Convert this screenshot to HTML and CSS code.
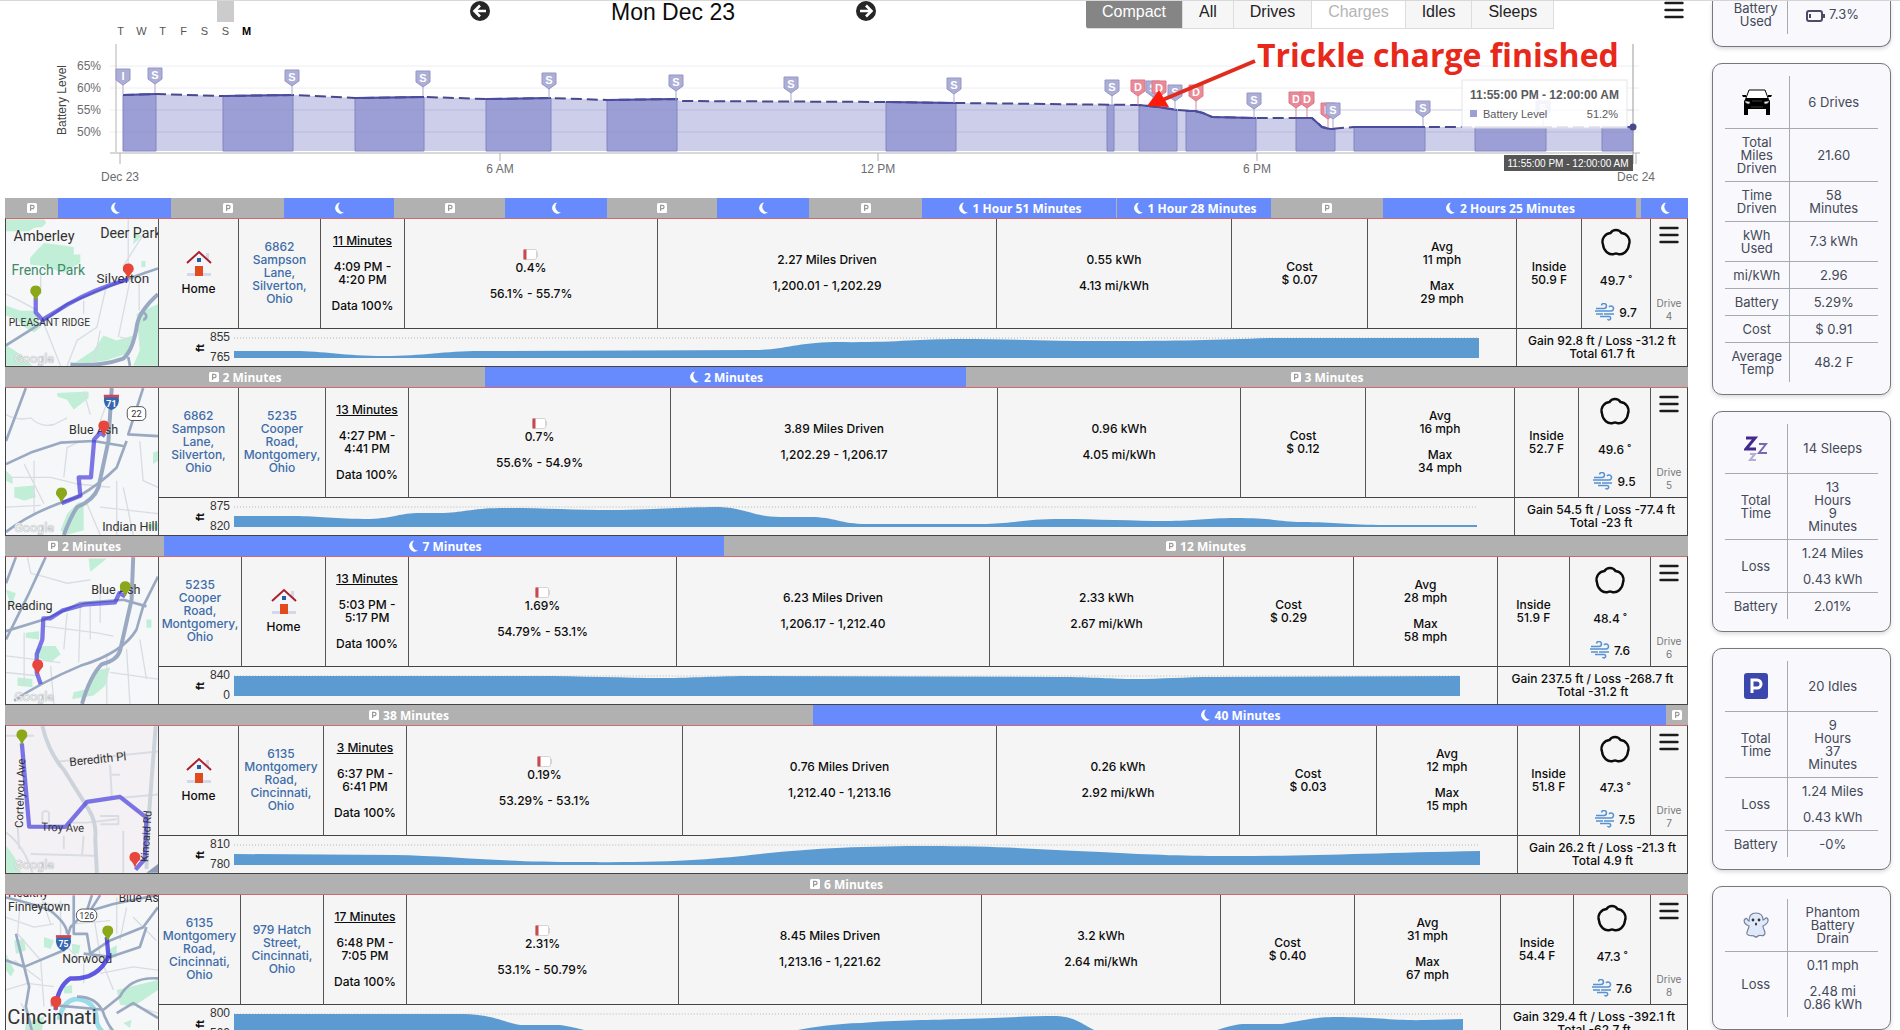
FILE: index.html
```html
<!DOCTYPE html>
<html lang="en">
<head>
    <meta charset="UTF-8">
    <meta name="viewport" content="width=device-width, initial-scale=1.0">
    <title>Mon Dec 23</title>
    <link rel="stylesheet" href="styles.css">
</head>
<body>
    <!-- shared icons -->
    <svg class="sprite" width="0" height="0" aria-hidden="true">
        <symbol id="moon" viewBox="0 0 12 12"><path d="M7 0.5A5.6 5.6 0 1 0 11 10.6A6 6 0 0 1 7 0.5Z" fill="#fff"/></symbol>
        <symbol id="park" viewBox="0 0 10 10"><rect width="10" height="10" rx="1.5" fill="#fff"/><path d="M3.6 8V2.4H5.4A1.6 1.6 0 0 1 5.4 5.7H3.6" fill="none" stroke="#9a9a9a" stroke-width="1.2"/></symbol>
        <symbol id="menu" viewBox="0 0 20 18"><path d="M1.5 2H18.5M1.5 9H18.5M1.5 16H18.5" stroke="#1c1c1c" stroke-width="2.4" stroke-linecap="round"/></symbol>
        <symbol id="house" viewBox="0 0 26 28"><rect x="20" y="3" width="3" height="7" fill="#d5d8e4"/><path d="M4 12L13 4L22 12V24H4Z" fill="#f3f4fa"/><rect x="1" y="23" width="24" height="3" fill="#d5d8ea"/><path d="M1 13L13 2L25 13" fill="none" stroke="#ab1f2d" stroke-width="2"/><rect x="11" y="8" width="4" height="4" fill="#20609f"/><rect x="9" y="16" width="8" height="10" fill="#e04a1c"/></symbol>
        <symbol id="low" viewBox="0 0 16 11"><rect x="0.5" y="0.5" width="13" height="10" rx="1.5" fill="#fff" stroke="#d9d4d4"/><path d="M14.500 3V8" stroke="#d9d4d4"/><rect x="0.5" y="0.5" width="3" height="10" fill="#c8494e"/></symbol>
        <symbol id="cloud" viewBox="0 0 32 30"><path d="M10.500 5C13 1 19 1 21.500 5C27 5.500 31 11 29 16.500C28.500 23 23 27.500 18 26Q16 25 14 26C9 27.500 3.500 23 3 16.500C1 11 5 5.500 10.500 5Z" fill="none" stroke="#0c0c0c" stroke-width="2.4"/></symbol>
        <symbol id="wind" viewBox="0 0 20 18"><path d="M0 8H12M1 5.500H9A2.500 2.500 0 1 0 6.500 2.500M12 8H16A2.500 2.500 0 1 0 14 4M1 11H8M5 13.500H14A1.700 1.700 0 1 1 12.500 16M9 11H19" fill="none" stroke="#5691d2" stroke-width="1.5"/></symbol>
        <symbol id="pin-red" viewBox="0 0 34 46"><path d="M17 1A16 16 0 0 1 27 30Q21 36 19 45H15Q13 36 7 30A16 16 0 0 1 17 1Z" fill="#e8453c"/></symbol>
        <symbol id="pin-green" viewBox="0 0 34 46"><path d="M17 1A16 16 0 0 1 27 30Q21 36 19 45H15Q13 36 7 30A16 16 0 0 1 17 1Z" fill="#8aa81a"/></symbol>
        <symbol id="flag-purple" viewBox="0 0 16 26"><path d="M8 16V26" stroke="#a9a8cf"/><path d="M1 1H15V12L8 17L1 12Z" fill="#acaed6" stroke="#9596c6"/></symbol>
        <symbol id="flag-red" viewBox="0 0 16 26"><path d="M8 16V26" stroke="#d58b9c"/><path d="M1 1H15V12L8 17L1 12Z" fill="#e88a98" stroke="#df7687"/></symbol>
    </svg>

    <div class="page">
        <main class="main">
            <header class="header">
                <div class="week">
                    <span>T</span><span>W</span><span>T</span><span>F</span><span>S</span><span class="marked">S</span><span class="today">M</span>
                </div>
                <div class="day-nav">
                    <button class="icon-button" aria-label="Previous day"><svg width="20" height="20" viewBox="0 0 20 20"><circle cx="10" cy="10" r="10" fill="#262626"/><path d="M10 4.500L4.500 10L10 15.500M5 10H16" fill="none" stroke="#fff" stroke-width="2.600"/></svg></button>
                    <h1>Mon Dec 23</h1>
                    <button class="icon-button" aria-label="Next day"><svg width="20" height="20" viewBox="0 0 20 20"><circle cx="10" cy="10" r="10" fill="#262626"/><path d="M10 4.500L15.500 10L10 15.500M15 10H4" fill="none" stroke="#fff" stroke-width="2.600"/></svg></button>
                </div>
                <div class="filters">
                    <button class="active">Compact</button><button>All</button><button>Drives</button><button disabled>Charges</button><button>Idles</button><button>Sleeps</button>
                </div>
                <button class="icon-button header-menu" aria-label="Menu"><svg width="20" height="18"><use href="#menu"/></svg></button>
            </header>

            <svg class="battery-chart" viewBox="5 40 1683 158">
                <path d="M110 66H1639M110 88H1639M110 110H1639M110 132H1639" stroke="#eeeef2"/>
                <path d="M123 95L156 94L223 96L293 95L355 98L424 97L486 99L551 98L607 100L677 99L680 101L886 102L956 103L1139 105L1158 107L1177 110L1195 111L1203 113L1212 117L1256 118L1312 118L1322 127L1330 129L1354 127H1633V151H123Z" fill="#cdceea"/>
                <g fill="#9c9fd5" stroke="#8284c0">
                    <path d="M123 95L156 94V151H123Z"/>
                    <path d="M223 96L293 95V151H223Z"/>
                    <path d="M355 98L424 97V151H355Z"/>
                    <path d="M486 99L551 98V151H486Z"/>
                    <path d="M607 100L677 99V151H607Z"/>
                    <path d="M886 102L956 103V151H886Z"/>
                    <path d="M1107 105H1114V151H1107Z"/>
                    <path d="M1139 105L1158 107L1177 110V151H1139Z"/>
                    <path d="M1186 111H1195L1203 113L1212 117L1256 118V151H1186Z"/>
                    <path d="M1296 118H1312L1322 127L1330 129H1335V151H1296Z"/>
                    <path d="M1354 127H1425V151H1354Z"/>
                    <path d="M1475 127H1546V151H1475Z"/>
                    <path d="M1602 127H1633V151H1602Z"/>
                </g>
                <path d="M123 110H1633M123 132H1633" stroke="#8d8fc0" opacity="0.3"/>
                <path d="M123 95L156 94L223 96L293 95L355 98L424 97L486 99L551 98L607 100L677 99L680 101L886 102L956 103L1139 105L1158 107L1177 110L1195 111L1203 113L1212 117L1256 118L1296 118L1312 118L1322 127L1330 129L1354 127H1633" fill="none" stroke="#48488c" stroke-width="2" stroke-dasharray="11 5"/>
                <path d="M123 95L156 94M223 96L293 95M355 98L424 97M486 99L551 98M607 100L677 99M886 102L956 103M1139 105L1158 107L1177 110M1186 111H1195L1203 113L1212 117L1256 118M1296 118H1312L1322 127L1330 129H1335M1354 127H1425M1475 127H1546M1602 127H1633" fill="none" stroke="#4a4c9e" stroke-width="2"/>
                <path d="M116 44V152M110 153H1640" fill="none" stroke="#cbcbd0" stroke-width="1.500"/>
                <path d="M120 153V164M500 153V161M878 153V161M1257 153V161M1636 153V164" stroke="#b0b0b5"/>
                <g class="axis">
                    <text x="101" y="70" text-anchor="end">65%</text>
                    <text x="101" y="92" text-anchor="end">60%</text>
                    <text x="101" y="114" text-anchor="end">55%</text>
                    <text x="101" y="136" text-anchor="end">50%</text>
                    <text x="120" y="181" text-anchor="middle">Dec 23</text>
                    <text x="500" y="173" text-anchor="middle">6 AM</text>
                    <text x="878" y="173" text-anchor="middle">12 PM</text>
                    <text x="1257" y="173" text-anchor="middle">6 PM</text>
                    <text x="1636" y="181" text-anchor="middle">Dec 24</text>
                    <text class="axis-title" transform="translate(66 100) rotate(-90)" text-anchor="middle">Battery Level</text>
                </g>
                <g class="flags">
                    <use href="#flag-purple" x="115" y="68" width="16" height="26"/><text x="123" y="80">I</text>
                    <use href="#flag-purple" x="147" y="67" width="16" height="26"/><text x="155" y="79">S</text>
                    <use href="#flag-purple" x="284" y="69" width="16" height="26"/><text x="292" y="81">S</text>
                    <use href="#flag-purple" x="415" y="70" width="16" height="26"/><text x="423" y="82">S</text>
                    <use href="#flag-purple" x="541" y="72" width="16" height="26"/><text x="549" y="84">S</text>
                    <use href="#flag-purple" x="668" y="74" width="16" height="26"/><text x="676" y="86">S</text>
                    <use href="#flag-purple" x="783" y="76" width="16" height="26"/><text x="791" y="88">S</text>
                    <use href="#flag-purple" x="946" y="77" width="16" height="26"/><text x="954" y="89">S</text>
                    <use href="#flag-purple" x="1104" y="79" width="16" height="26"/><text x="1112" y="91">S</text>
                    <use href="#flag-red" x="1130" y="79" width="16" height="26"/><text x="1138" y="91">D</text>
                    <use href="#flag-purple" x="1145" y="80" width="16" height="26"/><text x="1153" y="92">S</text>
                    <use href="#flag-red" x="1151" y="80" width="16" height="26"/><text x="1159" y="92">D</text>
                    <use href="#flag-purple" x="1167" y="84" width="16" height="26"/><text x="1175" y="96">S</text>
                    <use href="#flag-red" x="1188" y="84" width="16" height="26"/><text x="1196" y="96">D</text>
                    <use href="#flag-purple" x="1246" y="92" width="16" height="26"/><text x="1254" y="104">S</text>
                    <use href="#flag-red" x="1288" y="91" width="16" height="26"/><text x="1296" y="103">D</text>
                    <use href="#flag-red" x="1299" y="91" width="16" height="26"/><text x="1307" y="103">D</text>
                    <use href="#flag-red" x="1320" y="102" width="16" height="26"/><text x="1328" y="114">D</text>
                    <use href="#flag-purple" x="1325" y="102" width="16" height="26"/><text x="1333" y="114">S</text>
                    <use href="#flag-purple" x="1415" y="100" width="16" height="26"/><text x="1423" y="112">S</text>
                    <use href="#flag-purple" x="1535" y="100" width="16" height="26"/><text x="1543" y="112">S</text>
                </g>

                <path d="M1633 44V164" stroke="#9a9aa0"/>
                <circle cx="1633" cy="127" r="3.500" fill="#48488c"/>
                <g class="tip">
                    <rect x="1462" y="80" width="165" height="48" fill="#fff" opacity="0.880" stroke="#e4e4e8"/>
                    <text x="1470" y="99" class="tip-title">11:55:00 PM - 12:00:00 AM</text>
                    <rect x="1470" y="110" width="7" height="7" fill="#9c9fd5"/>
                    <text x="1483" y="118">Battery Level</text>
                    <text x="1618" y="118" text-anchor="end">51.2%</text>
                </g>
                <rect x="1504" y="155" width="129" height="16" fill="#555"/>
                <text x="1568" y="167" class="cursor-label">11:55:00 PM - 12:00:00 AM</text>

                <path d="M1255 61L1160 101" stroke="#e02b1d" stroke-width="4"/>
                <path d="M1147 106L1159 90L1169 107Z" fill="#fb1b0b"/>
                <text x="1257" y="67" class="note">Trickle charge finished</text>
            </svg>

            <div class="strip">
                <div class="idle" style="flex-grow:53"><svg class="p"><use href="#park"/></svg></div>
                <div class="sleep" style="flex-grow:113"><svg class="m"><use href="#moon"/></svg></div>
                <div class="idle" style="flex-grow:113"><svg class="p"><use href="#park"/></svg></div>
                <div class="sleep" style="flex-grow:110"><svg class="m"><use href="#moon"/></svg></div>
                <div class="idle" style="flex-grow:111"><svg class="p"><use href="#park"/></svg></div>
                <div class="sleep" style="flex-grow:102"><svg class="m"><use href="#moon"/></svg></div>
                <div class="idle" style="flex-grow:110"><svg class="p"><use href="#park"/></svg></div>
                <div class="sleep" style="flex-grow:92"><svg class="m"><use href="#moon"/></svg></div>
                <div class="idle" style="flex-grow:113"><svg class="p"><use href="#park"/></svg></div>
                <div class="sleep" style="flex-grow:194"><svg class="m"><use href="#moon"/></svg>1 Hour 51 Minutes</div>
                <div class="idle" style="flex-grow:1"></div>
                <div class="sleep" style="flex-grow:154"><svg class="m"><use href="#moon"/></svg>1 Hour 28 Minutes</div>
                <div class="idle" style="flex-grow:112"><svg class="p"><use href="#park"/></svg></div>
                <div class="sleep" style="flex-grow:253"><svg class="m"><use href="#moon"/></svg>2 Hours 25 Minutes</div>
                <div class="idle" style="flex-grow:5"></div>
                <div class="sleep" style="flex-grow:47"><svg class="m"><use href="#moon"/></svg></div>
            </div>
            <section class="drive">
                <svg class="map" viewBox="15 73 460 444">
                    <path class="park" d="M15 73H130Q145 85 120 98Q100 95 85 110H15ZM88 190Q110 165 130 145Q180 150 220 158V180H240V205L190 235L130 215L88 210ZM15 335L60 350H100L120 400L100 415Q60 400 50 375L15 365ZM15 455Q60 480 95 517H15ZM310 425L350 440L400 425L380 480L320 500L210 517L280 470ZM410 360L475 330V517H400L420 470ZM405 110L425 125L400 150ZM425 200H437V218H425Z"/>
                    <path class="lane" d="M385 73V260L440 230M430 120L370 215M15 300Q60 320 110 350M320 270L290 400L230 440L200 517M390 260L355 430M120 240V300M250 320V360M300 410L280 517M130 390L180 517M418 260V350M360 430L400 440"/>
                    <path class="road" d="M15 455L110 395L200 330L380 255L475 222"/>
                    <path class="road thick" d="M475 300Q420 350 412 390Q400 470 370 495Q300 520 210 513"/>
                    <path class="road" d="M420 360A11 11 0 1 1 430 378M385 490L390 517"/>
                    <text x="38" y="138" font-size="44">Amberley</text>
                    <text x="300" y="130" font-size="43">Deer Park</text>
                    <text x="32" y="242" font-size="42" class="green">French Park</text>
                    <text x="289" y="267" font-size="41">Silverton</text>
                    <text x="23" y="396" font-size="31">PLEASANT RIDGE</text>
                    <path class="route" d="M105 310V355L125 378L200 332Q280 285 385 255"/>
                    <use href="#pin-green" x="88" y="273" width="34" height="46"/>
                    <use href="#pin-red" x="368" y="206" width="34" height="46"/>
                    <text class="google" x="40" y="507">Google</text>
                </svg>
                <div class="stats stats-4">
                    <div class="place"><svg width="26" height="28"><use href="#house"/></svg>Home</div>
                    <div><a href="#">6862<br>Sampson<br>Lane,<br>Silverton,<br>Ohio</a></div>
                    <div><p><u>11 Minutes</u></p><p>4:09 PM -<br>4:20 PM</p><p>Data 100%</p></div>
                    <div><p class="charge"><svg width="16" height="11"><use href="#low"/></svg>0.4%</p><p>56.1% - 55.7%</p></div>
                    <div><p>2.27 Miles Driven</p><p>1,200.01 - 1,202.29</p></div>
                    <div><p>0.55 kWh</p><p>4.13 mi/kWh</p></div>
                    <div><p>Cost<br>$ 0.07</p></div>
                    <div><p>Avg<br>11 mph</p><p>Max<br>29 mph</p></div>
                    <div><p>Inside<br>50.9 F</p></div>
                    <div class="weather"><svg width="32" height="30"><use href="#cloud"/></svg><span>49.7 ˚</span><span><svg width="20" height="18"><use href="#wind"/></svg> 9.7</span></div>
                    <div class="more"><button class="icon-button" aria-label="Drive 4 menu"><svg width="20" height="18"><use href="#menu"/></svg></button><span>Drive<br>4</span></div>
                    <div class="profile">
                        <span class="unit">ft</span><span class="range"><span>855</span><span>765</span></span>
                        <svg class="elevation" viewBox="0 0 1245 21" preserveAspectRatio="none"><path d="M0 1H1245" class="dots"/><path class="hill" d="M0 14H60C90 14 110 19 150 19C190 19 210 14 246 14L520 13C550 13 560 6 600 5C660 6 680 2 726 2C780 2 820 4 866 4C950 4 980 3 1036 1H1245V21H0Z"/></svg>
                    </div>
                    <div class="gain"><p>Gain 92.8 ft / Loss -31.2 ft<br>Total 61.7 ft</p></div>
                </div>
            </section>

            <div class="strip">
                <div class="idle" style="flex-grow:480"><svg class="p"><use href="#park"/></svg>2 Minutes</div>
                <div class="sleep" style="flex-grow:481"><svg class="m"><use href="#moon"/></svg>2 Minutes</div>
                <div class="idle" style="flex-grow:722"><svg class="p"><use href="#park"/></svg>3 Minutes</div>
            </div>
            <section class="drive">
                <svg class="map" viewBox="15 580 460 444">
                    <path class="park" d="M170 595L265 590V610L220 645L200 615L170 605ZM40 880L100 875L105 910L70 920L40 910ZM235 925H250V1010L200 1024L180 1010L200 960ZM460 775L475 770V800L460 810ZM15 830L35 850V870L15 860ZM440 990H475V1010L440 1005Z"/>
                    <path class="lane" d="M15 660Q50 680 90 670Q120 700 160 690L200 670M100 800V960M15 850H150L230 870L330 880M190 850L200 760L240 740M70 810L130 930M350 860V1024M300 940L475 960M420 740L430 860L475 880M250 590L270 660M260 930L300 1024M15 940L120 935M370 880L400 1024M330 600L300 680"/>
                    <path class="road" d="M15 810L90 775L180 745L280 740L370 755M75 580L15 740M430 580L385 720L475 725M380 740L350 820Q300 870 230 910Q100 950 15 1015"/>
                    <path class="road thick" d="M335 580L325 740L295 880Q280 920 230 940Q210 970 190 1024"/>
                    <text x="206" y="718" font-size="38">Blue Ash</text>
                    <text x="306" y="1013" font-size="38">Indian Hill</text>
                    <path class="route" d="M183 928L240 906L235 850H272L282 735L300 715L315 725"/>
                    <path d="M312 605Q334 595 356 605Q362 635 334 647Q306 635 312 605Z" fill="#3467b0"/><path d="M311 600H357V608H311Z" fill="#d0455a"/>
                    <text x="334" y="637" font-size="27" class="shield">71</text>
                    <rect x="382" y="636" width="56" height="42" rx="14" fill="#fff" stroke="#555" stroke-width="3"/>
                    <text x="394" y="668" font-size="28">22</text>
                    <use href="#pin-green" x="166" y="880" width="34" height="46"/>
                    <use href="#pin-red" x="294" y="677" width="34" height="46"/>
                    <text class="google" x="40" y="1014">Google</text>
                </svg>
                <div class="stats stats-5">
                    <div><a href="#">6862<br>Sampson<br>Lane,<br>Silverton,<br>Ohio</a></div>
                    <div><a href="#">5235<br>Cooper<br>Road,<br>Montgomery,<br>Ohio</a></div>
                    <div><p><u>13 Minutes</u></p><p>4:27 PM -<br>4:41 PM</p><p>Data 100%</p></div>
                    <div><p class="charge"><svg width="16" height="11"><use href="#low"/></svg>0.7%</p><p>55.6% - 54.9%</p></div>
                    <div><p>3.89 Miles Driven</p><p>1,202.29 - 1,206.17</p></div>
                    <div><p>0.96 kWh</p><p>4.05 mi/kWh</p></div>
                    <div><p>Cost<br>$ 0.12</p></div>
                    <div><p>Avg<br>16 mph</p><p>Max<br>34 mph</p></div>
                    <div><p>Inside<br>52.7 F</p></div>
                    <div class="weather"><svg width="32" height="30"><use href="#cloud"/></svg><span>49.6 ˚</span><span><svg width="20" height="18"><use href="#wind"/></svg> 9.5</span></div>
                    <div class="more"><button class="icon-button" aria-label="Drive 5 menu"><svg width="20" height="18"><use href="#menu"/></svg></button><span>Drive<br>5</span></div>
                    <div class="profile">
                        <span class="unit">ft</span><span class="range"><span>875</span><span>820</span></span>
                        <svg class="elevation" viewBox="0 0 1241 21" preserveAspectRatio="none"><path d="M0 1H1241" class="dots"/><path class="hill" d="M0 10H60C85 10 100 13 136 13C160 12 165 7 186 7H210C230 6 240 2 270 2C310 2 340 4 376 4C420 4 440 1 485 1C510 2 520 11 545 11H575C600 11 605 18 632 18H751C780 17 790 13 826 13C860 13 900 15 930 15C960 15 970 12 1000 12C1040 12 1045 16 1066 16C1100 16 1110 19 1150 19H1241V21H0Z"/></svg>
                    </div>
                    <div class="gain"><p>Gain 54.5 ft / Loss -77.4 ft<br>Total -23 ft</p></div>
                </div>
            </section>

            <div class="strip">
                <div class="idle" style="flex-grow:159"><svg class="p"><use href="#park"/></svg>2 Minutes</div>
                <div class="sleep" style="flex-grow:560"><svg class="m"><use href="#moon"/></svg>7 Minutes</div>
                <div class="idle" style="flex-grow:964"><svg class="p"><use href="#park"/></svg>12 Minutes</div>
            </div>
            <section class="drive">
                <svg class="map" viewBox="15 51 460 444">
                    <path class="park" d="M265 55H320L270 95ZM130 320H165L180 345L150 370L110 355L105 330ZM285 395L330 385L315 440L280 470L215 480L220 460L260 450ZM15 150L45 160L30 200ZM75 280L115 275V300L75 295ZM50 415L95 420V445L50 440ZM440 240H455V265H440Z"/>
                    <path class="lane" d="M80 51L90 100L130 110L200 130L270 120M240 200L235 370M130 260L290 280L340 290M15 350L180 370M70 280V440M200 220L190 330M150 380L160 495M330 400L475 420M320 340V495M420 300L440 420M270 200V300M300 130V250M380 330L390 495M15 400L110 410"/>
                    <path class="road" d="M45 51L15 130M135 51L80 170L15 300M15 275L130 240L240 190L370 180L440 200M475 110L430 200L410 270Q370 340 240 380Q120 430 40 485"/>
                    <path class="road thick" d="M400 51L395 180L360 335Q350 365 305 375Q270 410 245 495"/>
                    <text x="273" y="164" font-size="38">Blue Ash</text>
                    <text x="19" y="212" font-size="38">Reading</text>
                    <path class="route" d="M376 170L358 160L345 188L250 195L185 213L150 236H128L125 300L108 345V400L120 435"/>
                    <use href="#pin-green" x="359" y="123" width="34" height="46"/>
                    <use href="#pin-red" x="94" y="360" width="34" height="46"/>
                    <text class="google" x="40" y="486">Google</text>
                </svg>
                <div class="stats stats-6">
                    <div><a href="#">5235<br>Cooper<br>Road,<br>Montgomery,<br>Ohio</a></div>
                    <div class="place"><svg width="26" height="28"><use href="#house"/></svg>Home</div>
                    <div><p><u>13 Minutes</u></p><p>5:03 PM -<br>5:17 PM</p><p>Data 100%</p></div>
                    <div><p class="charge"><svg width="16" height="11"><use href="#low"/></svg>1.69%</p><p>54.79% - 53.1%</p></div>
                    <div><p>6.23 Miles Driven</p><p>1,206.17 - 1,212.40</p></div>
                    <div><p>2.33 kWh</p><p>2.67 mi/kWh</p></div>
                    <div><p>Cost<br>$ 0.29</p></div>
                    <div><p>Avg<br>28 mph</p><p>Max<br>58 mph</p></div>
                    <div><p>Inside<br>51.9 F</p></div>
                    <div class="weather"><svg width="32" height="30"><use href="#cloud"/></svg><span>48.4 ˚</span><span><svg width="20" height="18"><use href="#wind"/></svg> 7.6</span></div>
                    <div class="more"><button class="icon-button" aria-label="Drive 6 menu"><svg width="20" height="18"><use href="#menu"/></svg></button><span>Drive<br>6</span></div>
                    <div class="profile">
                        <span class="unit">ft</span><span class="range"><span>840</span><span>0</span></span>
                        <svg class="elevation" viewBox="0 0 1227 21" preserveAspectRatio="none"><path d="M0 1H1227" class="dots"/><path class="hill" d="M0 1H300C350 1 390 3 430 3C460 3 480 1 520 1L826 2C860 2 880 4 900 4C930 4 950 2 980 2L1227 1V21H0Z"/></svg>
                    </div>
                    <div class="gain"><p>Gain 237.5 ft / Loss -268.7 ft<br>Total -31.2 ft</p></div>
                </div>
            </section>

            <div class="strip">
                <div class="idle" style="flex-grow:808"><svg class="p"><use href="#park"/></svg>38 Minutes</div>
                <div class="sleep" style="flex-grow:853"><svg class="m"><use href="#moon"/></svg>40 Minutes</div>
                <div class="idle" style="flex-grow:22"><svg class="p"><use href="#park"/></svg></div>
            </div>
            <section class="drive">
                <svg class="map" viewBox="15 558 460 444">
                    <path class="block" d="M15 558H475V1002H15Z"/>
                    <path class="park" d="M15 920Q50 960 60 1002H15Z"/>
                    <path class="lane wide" d="M15 587H100M175 665L475 635M330 675L335 770M335 705H360M50 860L55 930M15 880Q70 920 95 1002M90 945L285 950M260 850L350 840M125 850V820A12 12 0 0 1 145 820V850M300 830H355V855H300M370 875V1002M200 850H260M190 890V930M250 890L245 950M365 775L475 765"/>
                    <path class="avenue" d="M125 558Q145 640 190 690L265 810Q290 850 285 900L290 1002M468 558L445 860L440 990"/>
                    <path d="M440 1002L475 975V1002Z" fill="#8e9db5"/>
                    <path class="route" d="M63 610L85 862L195 863L260 787L360 772L440 835L435 960L407 992"/>
                    <text font-size="36" transform="translate(208 679) rotate(-6)">Beredith Pl</text>
                    <text font-size="34" transform="translate(66 866) rotate(-88)">Cortelyou Ave</text>
                    <text font-size="34" transform="translate(122 874) rotate(2)">Troy Ave</text>
                    <text font-size="33" transform="translate(445 970) rotate(-86)">Kincaid Rd</text>
                    <use href="#pin-green" x="46" y="567" width="34" height="46"/>
                    <use href="#pin-red" x="388" y="938" width="34" height="46"/>
                    <text class="google" x="40" y="991">Google</text>
                </svg>
                <div class="stats stats-7">
                    <div class="place"><svg width="26" height="28"><use href="#house"/></svg>Home</div>
                    <div><a href="#">6135<br>Montgomery<br>Road,<br>Cincinnati,<br>Ohio</a></div>
                    <div><p><u>3 Minutes</u></p><p>6:37 PM -<br>6:41 PM</p><p>Data 100%</p></div>
                    <div><p class="charge"><svg width="16" height="11"><use href="#low"/></svg>0.19%</p><p>53.29% - 53.1%</p></div>
                    <div><p>0.76 Miles Driven</p><p>1,212.40 - 1,213.16</p></div>
                    <div><p>0.26 kWh</p><p>2.92 mi/kWh</p></div>
                    <div><p>Cost<br>$ 0.03</p></div>
                    <div><p>Avg<br>12 mph</p><p>Max<br>15 mph</p></div>
                    <div><p>Inside<br>51.8 F</p></div>
                    <div class="weather"><svg width="32" height="30"><use href="#cloud"/></svg><span>47.3 ˚</span><span><svg width="20" height="18"><use href="#wind"/></svg> 7.5</span></div>
                    <div class="more"><button class="icon-button" aria-label="Drive 7 menu"><svg width="20" height="18"><use href="#menu"/></svg></button><span>Drive<br>7</span></div>
                    <div class="profile">
                        <span class="unit">ft</span><span class="range"><span>810</span><span>780</span></span>
                        <svg class="elevation" viewBox="0 0 1245 21" preserveAspectRatio="none"><path d="M0 1H1245" class="dots"/><path class="hill" d="M0 10L160 11C220 12 260 18 346 18C440 19 480 15 526 10C580 4 630 2 696 2C760 2 800 5 866 8C920 11 950 12 1000 12C1080 12 1140 9 1245 7V21H0Z"/></svg>
                    </div>
                    <div class="gain"><p>Gain 26.2 ft / Loss -21.3 ft<br>Total 4.9 ft</p></div>
                </div>
            </section>

            <div class="strip">
                <div class="idle" style="flex-grow:1683"><svg class="p"><use href="#park"/></svg>6 Minutes</div>
            </div>
            <section class="drive">
                <svg class="map" viewBox="15 1063 460 444">
                    <path class="park" d="M40 1200L70 1195L75 1230L45 1240ZM330 1225L350 1215V1250L330 1255ZM350 1350L475 1320V1350L400 1400L360 1395ZM130 1190L160 1200L150 1225L130 1220ZM215 1210L240 1215L235 1240L215 1240ZM75 1450L130 1430L120 1500H70ZM15 1240L40 1290L30 1310L15 1290ZM370 1450L395 1440L390 1465ZM190 1340L215 1335V1360H190Z"/>
                    <path d="M175 1440Q190 1375 235 1378Q290 1385 290 1450Q300 1480 350 1507" fill="none" stroke="#9adcea" stroke-width="14"/>
                    <path class="lane" d="M60 1063L50 1180L120 1260L130 1400M180 1080V1200L240 1260M15 1130L100 1160L160 1150M280 1120L300 1250L340 1350M120 1063L150 1150M380 1100L360 1200M15 1350L80 1330L160 1340M300 1300L400 1280L475 1290M400 1130L470 1200M220 1150L330 1140M410 1400L475 1420M320 1440L340 1507M60 1390L90 1440M250 1270V1330M350 1070V1180M90 1090H200M40 1260L120 1320"/>
                    <path class="road" d="M15 1070Q100 1090 150 1110Q200 1150 200 1180M275 1063L260 1110L210 1160L190 1230L70 1280L15 1260M475 1100L430 1160L330 1200L270 1240L260 1180H220V1063M440 1160L420 1220L330 1250L250 1240M70 1280L85 1340L75 1400L95 1480L110 1507M475 1315Q390 1310 360 1370L310 1410L150 1395M230 1370Q290 1370 310 1420Q330 1480 380 1507M350 1420L400 1390L475 1435M45 1180L70 1280M300 1063L270 1110L340 1090L470 1063"/>
                    <text x="21" y="1069" font-size="36">Healthy</text>
                    <text x="21" y="1110" font-size="37">Finneytown</text>
                    <text x="356" y="1084" font-size="36">Blue Ash</text>
                    <text x="185" y="1267" font-size="37">Norwood</text>
                    <path class="route dark" d="M320 1190L325 1250Q290 1320 210 1315Q170 1340 165 1410"/>
                    <rect x="228" y="1105" width="62" height="38" rx="18" fill="#fff" stroke="#555" stroke-width="3"/>
                    <text x="237" y="1134" font-size="27">126</text>
                    <path d="M167 1191Q189 1181 211 1191Q217 1220 189 1233Q161 1220 167 1191Z" fill="#3467b0"/><path d="M166 1184H212V1192H166Z" fill="#d0455a"/>
                    <text x="189" y="1219" font-size="26" class="shield">75</text>
                    <use href="#pin-green" x="306" y="1154" width="34" height="46"/>
                    <use href="#pin-red" x="149" y="1367" width="34" height="46"/>
                    <text x="19" y="1452" font-size="61">Cincinnati</text>
                </svg>
                <div class="stats stats-8">
                    <div><a href="#">6135<br>Montgomery<br>Road,<br>Cincinnati,<br>Ohio</a></div>
                    <div><a href="#">979 Hatch<br>Street,<br>Cincinnati,<br>Ohio</a></div>
                    <div><p><u>17 Minutes</u></p><p>6:48 PM -<br>7:05 PM</p><p>Data 100%</p></div>
                    <div><p class="charge"><svg width="16" height="11"><use href="#low"/></svg>2.31%</p><p>53.1% - 50.79%</p></div>
                    <div><p>8.45 Miles Driven</p><p>1,213.16 - 1,221.62</p></div>
                    <div><p>3.2 kWh</p><p>2.64 mi/kWh</p></div>
                    <div><p>Cost<br>$ 0.40</p></div>
                    <div><p>Avg<br>31 mph</p><p>Max<br>67 mph</p></div>
                    <div><p>Inside<br>54.4 F</p></div>
                    <div class="weather"><svg width="32" height="30"><use href="#cloud"/></svg><span>47.3 ˚</span><span><svg width="20" height="18"><use href="#wind"/></svg> 7.6</span></div>
                    <div class="more"><button class="icon-button" aria-label="Drive 8 menu"><svg width="20" height="18"><use href="#menu"/></svg></button><span>Drive<br>8</span></div>
                    <div class="profile">
                        <span class="unit">ft</span><span class="range"><span>800</span><span>500</span></span>
                        <svg class="elevation" viewBox="0 0 1227 21" preserveAspectRatio="none"><path d="M0 1H1227" class="dots"/><path class="hill" d="M0 1H225C260 1 270 10 286 12H325C345 15 350 18 370 21H540C570 16 590 11 626 10C660 7 700 7 726 6C770 5 790 3 821 3C845 4 850 16 870 21H970C990 14 1000 11 1010 11H1046C1070 7 1080 4 1100 4C1140 4 1160 8 1190 7L1227 6V21H0Z"/></svg>
                    </div>
                    <div class="gain"><p>Gain 329.4 ft / Loss -392.1 ft<br>Total -62.7 ft</p></div>
                </div>
            </section>
        </main>

        <aside class="sidebar">
            <div class="card first">
                <table>
                    <tr><th>Battery<br>Used</th><td><svg width="19" height="12" viewBox="0 0 19 12"><rect x="1" y="1" width="15" height="10" rx="2" fill="none" stroke="#4d4b66" stroke-width="2"/><path d="M18 4V8M4 4V8" stroke="#4d4b66" stroke-width="2"/></svg> 7.3%</td></tr>
                </table>
            </div>
            <div class="card drives">
                <table>
                    <tr class="top"><th><svg width="30" height="26" viewBox="0 0 30 26"><path d="M7 1H23L26 9V10H4V9Z" fill="#fff" stroke="#000"/><path d="M4 9H26L28 12V20H2V12Z M2 19H6V26H2Z M24 19H28V26H24Z M0 6H4V8H1Z M30 6H26V8H29Z"/><path d="M3 12L8 13L7 15L4 14ZM27 12L22 13L23 15L26 14ZM10 12H20M9 18H21" fill="#eee" stroke="#777" stroke-width="0.500"/></svg></th><td>6 Drives</td></tr>
                    <tr><th>Total<br>Miles<br>Driven</th><td>21.60</td></tr>
                    <tr><th>Time<br>Driven</th><td>58<br>Minutes</td></tr>
                    <tr><th>kWh<br>Used</th><td>7.3 kWh</td></tr>
                    <tr><th>mi/kWh</th><td>2.96</td></tr>
                    <tr><th>Battery</th><td>5.29%</td></tr>
                    <tr><th>Cost</th><td>$ 0.91</td></tr>
                    <tr><th>Average<br>Temp</th><td>48.2 F</td></tr>
                </table>
            </div>
            <div class="card">
                <table>
                    <tr class="top"><th><svg width="24" height="26" viewBox="0 0 24 26" fill="none"><path d="M2 2H11L2 13H12" stroke="#43298e" stroke-width="3"/><path d="M15 8H22L15 17H23" stroke="#7768b0" stroke-width="2"/><path d="M6 18H11L6 24H12" stroke="#b4aed0" stroke-width="2"/></svg></th><td>14 Sleeps</td></tr>
                    <tr><th>Total<br>Time</th><td>13<br>Hours<br>9<br>Minutes</td></tr>
                    <tr><th>Loss</th><td>1.24 Miles<br><br>0.43 kWh</td></tr>
                    <tr><th>Battery</th><td>2.01%</td></tr>
                </table>
            </div>
            <div class="card">
                <table>
                    <tr class="top"><th><svg width="24" height="26" viewBox="0 0 24 26"><rect width="24" height="26" rx="3" fill="#3c47ad"/><path d="M8 20V7H13A4 4 0 0 1 13 15H8" fill="none" stroke="#fff" stroke-width="3"/></svg></th><td>20 Idles</td></tr>
                    <tr><th>Total<br>Time</th><td>9<br>Hours<br>37<br>Minutes</td></tr>
                    <tr><th>Loss</th><td>1.24 Miles<br><br>0.43 kWh</td></tr>
                    <tr><th>Battery</th><td>-0%</td></tr>
                </table>
            </div>
            <div class="card">
                <table>
                    <tr class="top"><th><svg width="26" height="26" viewBox="0 0 26 26"><path d="M13 1C18 1 20 4 20 8C22 8 22 5 24 6C27 9 23 13 20 14C20 18 24 21 21 23C19 25 17 22 15 24Q13 26 11 24C9 23 6 25 4 22C3 20 6 17 6 14C2 13 0 9 2 7C4 5 4 8 6 9C6 4 8 1 13 1Z" fill="#dfe9fa" stroke="#75809c" stroke-width="1.200"/><circle cx="10" cy="8" r="1.400" fill="#333"/><circle cx="16" cy="8" r="1.400" fill="#333"/><ellipse cx="13" cy="12" rx="1" ry="1.500" fill="#333"/></svg></th><td>Phantom<br>Battery<br>Drain</td></tr>
                    <tr><th>Loss</th><td>0.11 mph<br><br>2.48 mi<br>0.86 kWh</td></tr>
                </table>
            </div>
        </aside>
    </div>
</body>
</html>
```
FILE: styles.css
```css
* {
    box-sizing: border-box;
}
body {
    margin: 0;
    height: 100vh;
    overflow: hidden;
    background: #fff;
    color: #0c0c0c;
    font-family: Inter, sans-serif;
    font-size: 12px;
    font-weight: 500;
    line-height: 13px;
}
.sprite {
    position: absolute;
}
p, h1 {
    margin: 0;
}
a {
    color: #3d6ca8;
    text-decoration: none;
}
button {
    font: inherit;
    cursor: pointer;
}
.icon-button {
    display: block;
    padding: 0;
    border: none;
    background: none;
}
.icon-button svg {
    display: block;
}
.page {
    display: flex;
    border-top: 1px solid #d8d8d8;
}
.main {
    flex: 1;
    min-width: 0;
    padding: 0 24px 0 5px;
}

/* header */
.header {
    display: grid;
    grid-template-columns: 465fr 406fr 210px 467px 111fr 20px;
    height: 39px;
    padding-right: 4px;
    font-family: "Liberation Sans", Arial, sans-serif;
}
.week {
    display: flex;
    padding-left: 105px;
    color: #555;
    font-size: 11px;
}
.week span {
    width: 21px;
    padding-top: 24px;
    text-align: center;
}
.week .marked {
    background: linear-gradient(#ccc, #ccc) no-repeat center top / 17px 21px;
}
.week .today {
    color: #000;
    font-weight: bold;
}
.day-nav {
    display: flex;
    justify-content: space-between;
    align-items: flex-start;
}
.day-nav h1 {
    font-size: 23px;
    font-weight: 400;
    line-height: 22px;
}
.filters {
    grid-column: 4;
    display: flex;
    align-items: flex-start;
}
.filters button {
    padding: 1px 16px 7px;
    border: 1px solid #ddd;
    border-width: 0 1px 1px 0;
    background: #f6f6f6;
    color: #222;
    font-size: 16px;
    font-weight: 400;
    line-height: 19px;
}
.filters .active {
    background: #858585;
    color: #fff;
    border-radius: 0 0 0 3px;
}
.filters button:disabled {
    background: #fff;
    color: #b5b5b5;
}
.header-menu {
    grid-column: 6;
    align-self: start;
}

/* battery chart */
.battery-chart {
    display: block;
    width: 100%;
    font-family: "Liberation Sans", Arial, sans-serif;
}
.axis text {
    font-size: 12px;
    font-weight: 400;
    fill: #6c6c70;
}
.axis .axis-title {
    fill: #444;
}
.flags {
    fill: #fff;
    font-size: 11px;
    font-weight: bold;
    text-anchor: middle;
}
.tip text {
    font-size: 11px;
    font-weight: 400;
    fill: #5a5a5e;
}
.tip .tip-title {
    font-size: 12px;
    font-weight: bold;
}
.cursor-label {
    font-size: 10px;
    fill: #fff;
    text-anchor: middle;
}
.note {
    font-family: "Comic Sans MS", "Open Sans", sans-serif;
    font-size: 32px;
    font-weight: bold;
    fill: #e8281a;
}

/* idle / sleep strips between drives */
.strip {
    display: flex;
    height: 20px;
    color: #fff;
    font-family: "Open Sans", sans-serif;
    font-weight: bold;
}
.strip div {
    display: flex;
    flex-basis: 0;
    min-width: 0;
    justify-content: center;
    align-items: center;
    gap: 4px;
    white-space: nowrap;
}
.idle {
    background: #b1b1b1;
}
.sleep {
    background: #678bfd;
}
.strip .p {
    width: 10px;
    height: 10px;
}
.strip .m {
    width: 12px;
    height: 12px;
}

/* drives */
.drive {
    display: grid;
    grid-template-columns: 152px 1fr;
    border: 1px solid #444;
    border-top-color: #cf6b70;
    background: #f5f5f5;
}
.map {
    display: block;
    width: 152px;
    height: 147px;
    background: #f5f7f8;
    font-family: Roboto, sans-serif;
    font-weight: 400;
    fill: #333;
}
.map .green {
    fill: #3e8b6b;
}
.map .park {
    fill: #c0eed6;
}
.map .block {
    fill: #f3f1f3;
}
.map .lane, .map .road, .map .route, .map .avenue {
    fill: none;
    stroke: #d9dde3;
    stroke-width: 4;
    stroke-linejoin: round;
}
.map .wide {
    stroke-width: 6;
}
.map .avenue {
    stroke: #cdd3db;
    stroke-width: 12;
}
.map .road {
    stroke: #9aa9c2;
    stroke-width: 8;
}
.map .thick {
    stroke-width: 12;
}
.map .route {
    stroke: #3a30dc;
    stroke-width: 13;
    opacity: 0.65;
}
.map .dark {
    opacity: 0.8;
}
.map .shield {
    fill: #fff;
    font-weight: bold;
    text-anchor: middle;
}
.map .google {
    fill: #fff;
    stroke: #c4c8cc;
    stroke-width: 2;
    font-size: 38px;
    font-weight: 500;
}
.stats {
    display: grid;
    grid-template-rows: 110px 37px;
    text-align: center;
}
.stats-4 {
    grid-template-columns: 80fr 82fr 84fr 253fr 339fr 235fr 136fr 149fr 65fr 69fr 37px;
}
.stats-5 {
    grid-template-columns: 80fr 87fr 83fr 262fr 327fr 243fr 125fr 149fr 64fr 72fr 37px;
}
.stats-6 {
    grid-template-columns: 83fr 84fr 83fr 268fr 313fr 234fr 130fr 144fr 72fr 81fr 37px;
}
.stats-7 {
    grid-template-columns: 80fr 85fr 83fr 276fr 314fr 243fr 137fr 141fr 62fr 71fr 37px;
}
.stats-8 {
    grid-template-columns: 82fr 83fr 83fr 272fr 303fr 239fr 134fr 146fr 73fr 77fr 37px;
}
.stats > div {
    display: flex;
    flex-direction: column;
    justify-content: center;
    align-items: center;
    gap: 13px;
    min-width: 0;
    padding-bottom: 2px;
    border-left: 1px solid #555;
    border-bottom: 1px solid #444;
    white-space: nowrap;
}
.stats > .place {
    gap: 4px;
}
.charge {
    padding-top: 4px;
}
.charge svg {
    display: block;
    margin: 0 auto 1px;
}
.stats > .weather {
    justify-content: space-between;
    gap: 0;
    padding: 9px 0 7px;
}
.weather span {
    display: flex;
    align-items: center;
    gap: 4px;
}
.stats > .more {
    justify-content: space-between;
    padding: 7px 0 5px;
    color: #777;
    font-size: 10px;
    font-weight: 400;
}
.stats > .profile {
    grid-column: 1 / 9;
    flex-direction: row;
    justify-content: flex-start;
    gap: 0;
    padding: 0 37px 0 35px;
    border-bottom: none;
}
.stats > .gain {
    grid-column: 9 / 12;
    border-bottom: none;
}
.unit {
    writing-mode: vertical-rl;
    transform: rotate(180deg);
    font-size: 11px;
    font-weight: bold;
}
.range {
    display: flex;
    flex-direction: column;
    gap: 7px;
    width: 23px;
    margin-right: 4px;
    font-family: "Liberation Sans", Arial, sans-serif;
    font-weight: 400;
    text-align: right;
    color: #333;
}
.elevation {
    flex: 1;
    min-width: 0;
    height: 21px;
}
.dots {
    stroke: #b5b5b5;
    stroke-dasharray: 1 2;
}
.hill {
    fill: #5c9bd1;
}

/* summary cards */
.sidebar {
    display: flex;
    flex-direction: column;
    gap: 16px;
    width: 179px;
    margin-right: 9px;
}
.card {
    padding: 12px;
    border: 1px solid #77777c;
    border-radius: 10px;
    background: #f8f8fd;
    box-shadow: 0 2px 4px rgba(0, 0, 0, 0.15);
}
.card.first {
    padding-top: 0;
    border-top: none;
    border-radius: 0 0 10px 10px;
}
.card table {
    width: 100%;
    border-collapse: collapse;
    color: #444956;
    font-size: 13px;
    text-align: center;
}
.card th {
    width: 62px;
    padding: 7px 0 6px;
    border-right: 1px solid #a9a9b2;
    font-weight: 400;
}
.card td {
    padding: 7px 0 6px;
    font-weight: 400;
}
.card.first th, .card.first td {
    padding-top: 1px;
}
.drives th {
    width: 64px;
}
.card tr + tr {
    border-top: 1px solid #a9a9b2;
}
.card .top {
    height: 50px;
}
.drives .top {
    height: 52px;
}
.card svg {
    vertical-align: middle;
}
```
